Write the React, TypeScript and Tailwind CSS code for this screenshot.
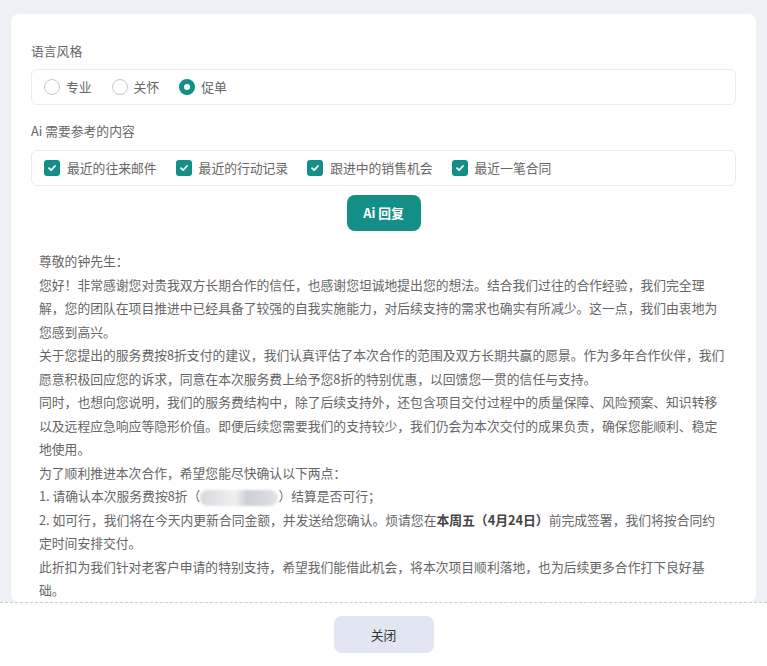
import { useState } from "react";

const teal = "bg-[#138f87]";

function Radio({ label, checked, onClick }: { label: string; checked: boolean; onClick: () => void }) {
  return (
    <button type="button" onClick={onClick} className="flex items-center gap-[6px]">
      {checked ? (
        <span className="w-4 h-4 rounded-full border-[5px] border-[#138f87] bg-white" />
      ) : (
        <span className="w-4 h-4 rounded-full border border-[#c9c9c9] bg-white" />
      )}
      <span>{label}</span>
    </button>
  );
}

function Check({ label }: { label: string }) {
  return (
    <label className="flex items-center gap-[7px]">
      <span className={`w-4 h-4 rounded-[3px] ${teal} flex items-center justify-center`}>
        <svg width="10" height="10" viewBox="0 0 10 10" fill="none">
          <path d="M2 5.2 L4.1 7.2 L8 3" stroke="white" strokeWidth="1.8" strokeLinecap="round" strokeLinejoin="round" />
        </svg>
      </span>
      <span>{label}</span>
    </label>
  );
}

export default function App() {
  const [tone, setTone] = useState("促单");
  const tones = ["专业", "关怀", "促单"];
  const refs = ["最近的往来邮件", "最近的行动记录", "跟进中的销售机会", "最近一笔合同"];

  return (
    <div
      className="h-[666px] flex flex-col bg-[#edf0f5] text-[12.8px] text-[#666]"
      style={{ fontFamily: '"Noto Sans CJK SC", "Noto Sans", sans-serif' }}
    >
      <div className="flex-1 overflow-hidden px-[11px] pt-[14px]">
        <div className="bg-white rounded-lg px-5 pt-[27px] min-h-full">
          <div className="h-5 leading-5 mb-2">语言风格</div>
          <div className="h-[36px] border border-[#ebebeb] rounded-md flex items-center pl-3 gap-5">
            {tones.map((t) => (
              <Radio key={t} label={t} checked={tone === t} onClick={() => setTone(t)} />
            ))}
          </div>

          <div className="h-5 leading-5 mt-4 mb-[9px]">Ai 需要参考的内容</div>
          <div className="h-[36px] border border-[#ebebeb] rounded-md flex items-center pl-3 gap-[19px]">
            {refs.map((r) => (
              <Check key={r} label={r} />
            ))}
          </div>

          <div className="flex justify-center mt-[9px]">
            <button className={`h-9 w-[74px] rounded-lg ${teal} text-white font-bold`}>Ai 回复</button>
          </div>

          <div className="pl-2 pr-[10px] mt-[18px] leading-[23.5px]">
            <p>尊敬的钟先生：</p>
            <p>
              您好！非常感谢您对贵我双方长期合作的信任，也感谢您坦诚地提出您的想法。结合我们过往的合作经验，我们完全理解，您的团队在项目推进中已经具备了较强的自我实施能力，对后续支持的需求也确实有所减少。这一点，我们由衷地为您感到高兴。
            </p>
            <p>
              关于您提出的服务费按8折支付的建议，我们认真评估了本次合作的范围及双方长期共赢的愿景。作为多年合作伙伴，我们愿意积极回应您的诉求，同意在本次服务费上给予您8折的特别优惠，以回馈您一贯的信任与支持。
            </p>
            <p>
              同时，也想向您说明，我们的服务费结构中，除了后续支持外，还包含项目交付过程中的质量保障、风险预案、知识转移以及远程应急响应等隐形价值。即便后续您需要我们的支持较少，我们仍会为本次交付的成果负责，确保您能顺利、稳定地使用。
            </p>
            <p>为了顺利推进本次合作，希望您能尽快确认以下两点：</p>
            <p>
              1. 请确认本次服务费按8折（
              <span className="inline-block align-middle w-[78px] h-[16px] rounded-full blur-[1px] bg-[linear-gradient(90deg,#d6d9dd,#e4e6e9_25%,#eef0f1_45%,#ccd0d4_60%,#d5d8dc_80%,#e3e5e8)]" />
              ）结算是否可行；
            </p>
            <p>
              2. 如可行，我们将在今天内更新合同金额，并发送给您确认。烦请您在
              <b className="text-[#444]">本周五（4月24日）</b>
              前完成签署，我们将按合同约定时间安排交付。
            </p>
            <p>
              此折扣为我们针对老客户申请的特别支持，希望我们能借此机会，将本次项目顺利落地，也为后续更多合作打下良好基础。
            </p>
          </div>
        </div>
      </div>

      <div className="h-16 shrink-0 bg-white border-t border-dashed border-[#cccccc] flex items-center justify-center">
        <button className="h-[37px] w-[100px] rounded-lg bg-[#e1e6f0] text-[#333]">关闭</button>
      </div>
    </div>
  );
}
